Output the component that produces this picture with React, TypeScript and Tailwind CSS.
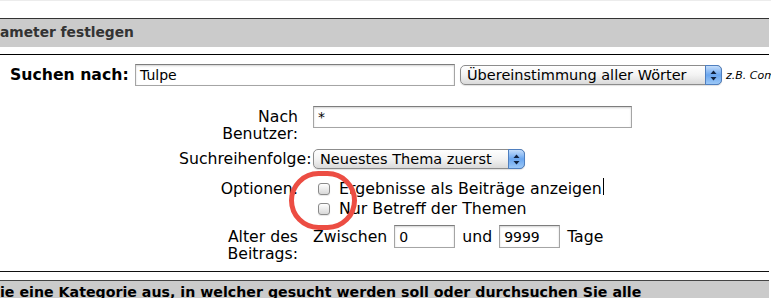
import React from "react";

function TextInput({ className, value }: { className: string; value: string }) {
  return (
    <div
      className={
        "shrink-0 flex items-center bg-white border border-[#a5a5a5] border-t-[#7d7d7d] shadow-[inset_0_1px_2px_rgba(0,0,0,0.18)] pl-[4px] text-[14px] leading-none text-black " +
        className
      }
    >
      {value}
    </div>
  );
}

function MacSelect({ className, label }: { className: string; label: string }) {
  return (
    <div
      className={
        "shrink-0 relative flex h-[20px] items-center rounded-[5px] border border-[#8c8c8c] bg-gradient-to-b from-white via-[#f3f3f3] to-[#dadada] shadow-[0_1px_1px_rgba(0,0,0,0.12)] pl-[6px] text-[14.5px] leading-none text-black " +
        className
      }
    >
      {label}
      <div className="absolute right-[-1px] top-[-1px] bottom-[-1px] w-[17px] rounded-r-[5px] border border-[#4f7fbf] bg-gradient-to-b from-[#c4ddfa] via-[#6aa6ef] to-[#9cc8f7] flex items-center justify-center">
        <svg width="7" height="11" viewBox="0 0 7 11">
          <path d="M3.5 0.5 L6.5 4 L0.5 4 Z" fill="#10213d" />
          <path d="M3.5 10.5 L6.5 7 L0.5 7 Z" fill="#10213d" />
        </svg>
      </div>
    </div>
  );
}

function Checkbox() {
  return (
    <div className="shrink-0 h-[12px] w-[12px] rounded-[3px] border border-[#8a8a8a] bg-gradient-to-b from-white to-[#d8d8d8] shadow-[0_1px_1px_rgba(0,0,0,0.1)]" />
  );
}

export default function App() {
  return (
    <div className="relative w-[771px] h-[298px] overflow-hidden bg-white text-black font-['DejaVu_Sans',sans-serif] whitespace-nowrap">
      <div className="h-px bg-[#ececec]" />
      <div className="h-[17px]" />
      <div className="w-[769px] h-[29px] border-t border-[#333333] bg-[#cbcbcb] flex items-center">
        <span className="text-[13.8px] font-bold text-[#333333] leading-none">ameter festlegen</span>
      </div>
      <div className="h-[7px]" />
      <div className="w-[769px] h-px bg-black" />

      {/* Suchen nach */}
      <div className="mt-[9px] flex items-center h-[22px]">
        <span className="shrink-0 ml-[10px] w-[125px] font-bold text-[15.7px] leading-none">Suchen nach:</span>
        <TextInput className="w-[320px] h-[22px]" value="Tulpe" />
        <MacSelect className="ml-[5px] w-[262px]" label="Übereinstimmung aller Wörter" />
        <span className="shrink-0 ml-[4px] italic text-[11px] leading-none">z.B. Computer</span>
      </div>

      {/* Nach Benutzer */}
      <div className="mt-[20px] flex items-start">
        <div className="shrink-0 ml-[179px] w-[119px] text-right text-[15.7px] leading-[17px] pt-[2px] whitespace-normal">
          Nach Benutzer:
        </div>
        <TextInput className="ml-[15px] w-[319px] h-[22px]" value="*" />
      </div>

      {/* Suchreihenfolge */}
      <div className="mt-[7px] flex items-center h-[20px]">
        <div className="shrink-0 ml-[179px] w-[134px] text-[15.7px] leading-none">Suchreihenfolge:</div>
        <MacSelect className="w-[212px]" label="Neuestes Thema zuerst" />
      </div>

      {/* Optionen */}
      <div className="mt-[10px] flex items-start">
        <div className="shrink-0 ml-[179px] w-[119px] text-right text-[15.7px] leading-[20px]">Optionen:</div>
        <div className="ml-[20px] flex flex-col">
          <div className="flex items-center h-[20px] gap-[9px]">
            <Checkbox />
            <span className="relative text-[15.8px] leading-none">
              Ergebnisse als Beiträge anzeigen
              <span className="absolute right-[-2px] top-[-3px] h-[17px] w-px bg-black" />
            </span>
          </div>
          <div className="flex items-center h-[20px] gap-[9px]">
            <Checkbox />
            <span className="text-[15.8px] leading-none">Nur Betreff der Themen</span>
          </div>
        </div>
      </div>

      {/* Alter des Beitrags */}
      <div className="mt-[6px] flex items-start">
        <div className="shrink-0 ml-[179px] w-[119px] text-right text-[15.7px] leading-[17px] pt-[3px] whitespace-normal">
          Alter des Beitrags:
        </div>
        <div className="ml-[15px] flex items-center h-[23px] text-[15.7px] leading-none">
          <span>Zwischen</span>
          <TextInput className="ml-[7px] w-[61px] h-[23px]" value="0" />
          <span className="ml-[7px]">und</span>
          <TextInput className="ml-[7px] w-[61px] h-[23px]" value="9999" />
          <span className="ml-[7px]">Tage</span>
        </div>
      </div>

      <div className="mt-[9px] w-[769px] h-px bg-[#111111]" />
      <div className="h-[8px]" />
      <div className="w-[769px] h-[20px] border-t border-[#444444] bg-[#cbcbcb] pt-[4px]">
        <span className="text-[14.2px] font-bold text-black leading-none block">
          ie eine Kategorie aus, in welcher gesucht werden soll oder durchsuchen Sie alle
        </span>
      </div>

      {/* red annotation circle */}
      <div className="absolute left-[289px] top-[171px] w-[68px] h-[59px] rounded-full border-[5px] border-[#ec4d43]" />
    </div>
  );
}
